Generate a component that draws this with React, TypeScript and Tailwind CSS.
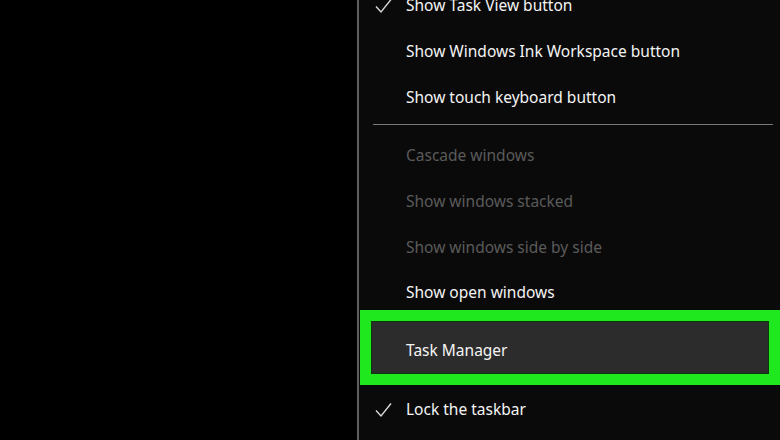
import React from 'react';

type Item = { label: string; checked?: boolean; disabled?: boolean };

const topItems: Item[] = [
  { label: 'Show Task View button', checked: true },
  { label: 'Show Windows Ink Workspace button' },
  { label: 'Show touch keyboard button' },
];

const windowItems: Item[] = [
  { label: 'Cascade windows', disabled: true },
  { label: 'Show windows stacked', disabled: true },
  { label: 'Show windows side by side', disabled: true },
];

const Check = () => (
  <svg width="17" height="16" viewBox="0 0 17 16" fill="none" className="absolute left-[16px]">
    <path d="M1 8.5 L6 14 L16 1.5" stroke="#d8d8d8" strokeWidth="1.4" />
  </svg>
);

const MenuRow: React.FC<{ item: Item; className?: string }> = ({ item, className }) => (
  <div className={`relative flex items-center pl-[47px] ${className ?? 'h-[46px]'}`}>
    {item.checked && <Check />}
    <span className={item.disabled ? 'text-[#5a5a5a]' : 'text-[#f4f4f4]'}>{item.label}</span>
  </div>
);

export default function App() {
  return (
    <div
      className="flex w-[780px] h-[440px] overflow-hidden bg-black text-[15.5px]"
      style={{ fontFamily: '"Segoe UI", "Noto Sans", "Open Sans", sans-serif' }}
    >
      {/* desktop */}
      <div className="w-[357px] shrink-0 bg-black" />

      {/* context menu */}
      <div className="flex-1 border-l-2 border-[#5e5e5e] bg-[#0a0a0a]">
        <div className="-mt-[17px]">
          {topItems.map((it) => (
            <MenuRow key={it.label} item={it} />
          ))}

          <div className="pt-[3px] pb-[8px] pl-[14px] pr-[7px]">
            <div className="h-px bg-[#7a7a7a]" />
          </div>

          {windowItems.map((it) => (
            <MenuRow key={it.label} item={it} />
          ))}

          <MenuRow item={{ label: 'Show open windows' }} className="h-[39px] pt-[5px]" />

          {/* highlighted item */}
          <div className="border-[12px] border-[#1fe81f] h-[75px] ml-[1px]">
            <div className="flex h-full items-center pl-[34px] bg-[#2c2c2c] outline outline-1 outline-[#0c3a0c] pt-[6px]">
              <span className="text-[#f4f4f4]">Task Manager</span>
            </div>
          </div>

          <MenuRow item={{ label: 'Lock the taskbar', checked: true }} className="h-[50px]" />
        </div>
      </div>
    </div>
  );
}
